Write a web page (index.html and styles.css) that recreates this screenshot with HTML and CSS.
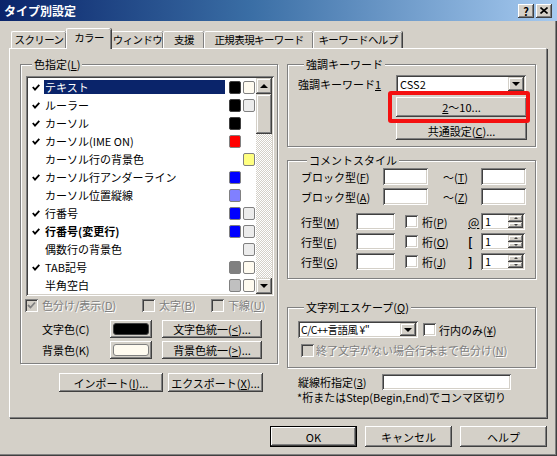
FILE: index.html
```html
<!DOCTYPE html>
<html lang="ja">
  <head>
    <meta charset="UTF-8" />
    <title>タイプ別設定</title>
    <link rel="stylesheet" href="styles.css">
  </head>
  <body>
    <div class="window">
      <!-- title bar -->
      <div class="titlebar">
        <span class="title">タイプ別設定</span>
        <div class="cap-btns">
          <span class="cap-btn">?</span>
          <span class="cap-btn">
            <svg width="8" height="7" viewBox="0 0 8 7"><path d="M0.5 0.5 L7.5 6.5 M7.5 0.5 L0.5 6.5" stroke="#000" stroke-width="1.6" /></svg>
          </span>
        </div>
      </div>

      <!-- tabs -->
      <div class="tabs">
        <div class="tab">スクリーン</div>
        <div class="tab active">カラー</div>
        <div class="tab">ウィンドウ</div>
        <div class="tab">支援</div>
        <div class="tab">正規表現キーワード</div>
        <div class="tab">キーワードヘルプ</div>
      </div>

      <div class="panel">
        <!-- left column -->
        <div class="col-left">
          <fieldset class="group group-color">
            <legend>色指定(<u>L</u>)</legend>
            <div class="listbox">
              <div class="rows">
                <div class="row"><span class="mark"><svg width="8" height="7" viewBox="0 0 8 7"><path d="M0.8 3 L3 5.6 L7.3 0.8" stroke="#000" stroke-width="1.8" fill="none" /></svg></span><span class="name"><span class="sel">テキスト</span></span><span class="sw c-black"></span><span class="sw c-cream"></span></div>
                <div class="row"><span class="mark"><svg width="8" height="7" viewBox="0 0 8 7"><path d="M0.8 3 L3 5.6 L7.3 0.8" stroke="#000" stroke-width="1.8" fill="none" /></svg></span><span class="name">ルーラー</span><span class="sw c-black"></span><span class="sw c-lgray"></span></div>
                <div class="row"><span class="mark"><svg width="8" height="7" viewBox="0 0 8 7"><path d="M0.8 3 L3 5.6 L7.3 0.8" stroke="#000" stroke-width="1.8" fill="none" /></svg></span><span class="name">カーソル</span><span class="sw c-black"></span><span></span></div>
                <div class="row"><span class="mark"><svg width="8" height="7" viewBox="0 0 8 7"><path d="M0.8 3 L3 5.6 L7.3 0.8" stroke="#000" stroke-width="1.8" fill="none" /></svg></span><span class="name">カーソル(IME ON)</span><span class="sw c-red"></span><span></span></div>
                <div class="row"><span class="mark"></span><span class="name">カーソル行の背景色</span><span></span><span class="sw c-yellow"></span></div>
                <div class="row"><span class="mark"><svg width="8" height="7" viewBox="0 0 8 7"><path d="M0.8 3 L3 5.6 L7.3 0.8" stroke="#000" stroke-width="1.8" fill="none" /></svg></span><span class="name">カーソル行アンダーライン</span><span class="sw c-blue"></span><span></span></div>
                <div class="row"><span class="mark"></span><span class="name">カーソル位置縦線</span><span class="sw c-lblue"></span><span></span></div>
                <div class="row"><span class="mark"><svg width="8" height="7" viewBox="0 0 8 7"><path d="M0.8 3 L3 5.6 L7.3 0.8" stroke="#000" stroke-width="1.8" fill="none" /></svg></span><span class="name">行番号</span><span class="sw c-blue"></span><span class="sw c-lgray"></span></div>
                <div class="row"><span class="mark"><svg width="8" height="7" viewBox="0 0 8 7"><path d="M0.8 3 L3 5.6 L7.3 0.8" stroke="#000" stroke-width="1.8" fill="none" /></svg></span><span class="name bold">行番号(変更行)</span><span class="sw c-blue"></span><span class="sw c-lgray"></span></div>
                <div class="row"><span class="mark"></span><span class="name">偶数行の背景色</span><span></span><span class="sw c-lgray"></span></div>
                <div class="row"><span class="mark"><svg width="8" height="7" viewBox="0 0 8 7"><path d="M0.8 3 L3 5.6 L7.3 0.8" stroke="#000" stroke-width="1.8" fill="none" /></svg></span><span class="name">TAB記号</span><span class="sw c-gray"></span><span class="sw c-cream"></span></div>
                <div class="row"><span class="mark"></span><span class="name">半角空白</span><span class="sw c-silver"></span><span class="sw c-cream"></span></div>
              </div>
              <div class="vscroll">
                <span class="sbtn"><i class="tri-up"></i></span>
                <span class="thumb"></span>
                <span class="track"></span>
                <span class="sbtn"><i class="tri-down"></i></span>
              </div>
            </div>

            <div class="cb-row">
              <label class="cb-item w1 disabled"><span class="cb checked"></span>色分け/表示(<u>D</u>)</label>
              <label class="cb-item w2 disabled"><span class="cb off"></span>太字(<u>B</u>)</label>
              <label class="cb-item disabled"><span class="cb off"></span>下線(<u>U</u>)</label>
            </div>

            <div class="color-row">
              <span class="color-label">文字色(C)</span>
              <span class="btn color-btn"><span class="chip chip-black"></span></span>
              <span class="btn uni-btn">文字色統一(<u>&lt;</u>)...</span>
            </div>
            <div class="color-row">
              <span class="color-label">背景色(K)</span>
              <span class="btn color-btn"><span class="chip chip-cream"></span></span>
              <span class="btn uni-btn">背景色統一(<u>&gt;</u>)...</span>
            </div>
          </fieldset>

          <div class="io-row">
            <span class="btn import-btn">インポート(<u>I</u>)...</span>
            <span class="btn export-btn">エクスポート(<u>X</u>)...</span>
          </div>
        </div>

        <!-- right column -->
        <div class="col-right">
          <fieldset class="group group-kw">
            <legend>強調キーワード</legend>
            <div class="kw-row">
              <span class="kw-label">強調キーワード<u>1</u></span>
              <span class="combo kw-combo"><span class="combo-val">CSS2</span><span class="combo-btn"><i class="tri-down"></i></span></span>
            </div>
            <div class="kw-btn-wrap">
              <span class="btn kw-btn tall"><u>2</u>〜10...</span>
              <span class="mark-box"></span>
            </div>
            <span class="btn kw-btn common">共通設定(<u>C</u>)...</span>
          </fieldset>

          <fieldset class="group group-comment">
            <legend>コメントスタイル</legend>
            <div class="brow">
              <span>ブロック型(<u>F</u>)</span>
              <span class="field"></span>
              <span class="tilde">〜(<u>T</u>)</span>
              <span class="field"></span>
            </div>
            <div class="brow">
              <span>ブロック型(<u>A</u>)</span>
              <span class="field"></span>
              <span class="tilde">〜(<u>Z</u>)</span>
              <span class="field"></span>
            </div>
            <div class="lrow first">
              <span>行型(<u>M</u>)</span>
              <span class="field"></span>
              <span></span>
              <label class="cb-item"><span class="cb"></span>桁(<u>P</u>)</label>
              <span class="pos"><u>@</u></span>
              <span class="spin"><span class="spin-val">1</span><span class="spin-btns"><span class="sbtn half"><i class="mini-up"></i></span><span class="sbtn half"><i class="mini-down"></i></span></span></span>
            </div>
            <div class="lrow">
              <span>行型(<u>E</u>)</span>
              <span class="field"></span>
              <span></span>
              <label class="cb-item"><span class="cb"></span>桁(<u>O</u>)</label>
              <span class="pos bold">[</span>
              <span class="spin"><span class="spin-val">1</span><span class="spin-btns"><span class="sbtn half"><i class="mini-up"></i></span><span class="sbtn half"><i class="mini-down"></i></span></span></span>
            </div>
            <div class="lrow">
              <span>行型(<u>G</u>)</span>
              <span class="field"></span>
              <span></span>
              <label class="cb-item"><span class="cb"></span>桁(<u>J</u>)</label>
              <span class="pos bold">]</span>
              <span class="spin"><span class="spin-val">1</span><span class="spin-btns"><span class="sbtn half"><i class="mini-up"></i></span><span class="sbtn half"><i class="mini-down"></i></span></span></span>
            </div>
          </fieldset>

          <fieldset class="group group-esc">
            <legend>文字列エスケープ(<u>Q</u>)</legend>
            <div class="esc-row">
              <span class="combo esc-combo"><span class="combo-val">C/C++言語風 ¥"</span><span class="combo-btn"><i class="tri-down"></i></span></span>
              <label class="cb-item"><span class="cb"></span>行内のみ(<u>¥</u>)</label>
            </div>
            <div class="esc-row2">
              <label class="cb-item disabled"><span class="cb off"></span>終了文字がない場合行末まで色分け(<u>N</u>)</label>
            </div>
          </fieldset>

          <div class="vline-row">
            <span class="vline-label">縦線桁指定(<u>3</u>)</span>
            <span class="field vline-field"></span>
          </div>
          <div class="note">*桁またはStep(Begin,End)でコンマ区切り</div>
        </div>
      </div>

      <div class="footer">
        <span class="btn foot-btn default">OK</span>
        <span class="btn foot-btn">キャンセル</span>
        <span class="btn foot-btn">ヘルプ</span>
      </div>
    </div>
  </body>
</html>
```

FILE: styles.css
```css
body {
  margin: 0;
  font-family: "Noto Sans CJK JP", "Noto Sans", sans-serif;
  font-size: 11px;
  color: #000;
  background: #d4d0c8;
}

u {
  text-decoration: underline;
  text-underline-offset: 1px;
}

.bold {
  font-weight: bold;
}

.window {
  width: 557px;
  height: 456px;
  box-sizing: border-box;
  background: #d4d0c8;
  box-shadow: inset -1px -1px #404040, inset -2px -2px #808080;
  overflow: hidden;
}

/* title bar */
.titlebar {
  height: 21px;
  display: flex;
  align-items: center;
  justify-content: space-between;
  padding: 0 5px 0 4px;
  background: linear-gradient(90deg, #0a246a 0%, #3a6ea5 45%, #a6caf0 100%);
}

.title {
  color: #fff;
  font-weight: bold;
  font-size: 12px;
  line-height: 14px;
}

.cap-btns {
  display: flex;
  gap: 2px;
}

.cap-btn {
  width: 16px;
  height: 14px;
  box-sizing: border-box;
  display: flex;
  align-items: center;
  justify-content: center;
  background: #d4d0c8;
  font-weight: bold;
  font-size: 11px;
  line-height: 12px;
  box-shadow: inset -1px -1px #404040, inset 1px 1px #fff, inset -2px -2px #808080;
}

/* generic win classic parts */
.btn {
  display: flex;
  align-items: center;
  justify-content: center;
  box-sizing: border-box;
  background: #d4d0c8;
  box-shadow: inset -1px -1px #404040, inset 1px 1px #fff, inset -2px -2px #808080, inset 2px 2px #d4d0c8;
  white-space: nowrap;
}

.sbtn {
  display: flex;
  align-items: center;
  justify-content: center;
  box-sizing: border-box;
  background: #d4d0c8;
  box-shadow: inset -1px -1px #404040, inset 1px 1px #d4d0c8, inset -2px -2px #808080, inset 2px 2px #fff;
}

.field {
  display: block;
  box-sizing: border-box;
  height: 17px;
  background: #fff;
  box-shadow: inset 1px 1px #808080, inset -1px -1px #fff, inset 2px 2px #404040, inset -2px -2px #d4d0c8;
}

.tri-up,
.tri-down {
  width: 0;
  height: 0;
  border-left: 4px solid transparent;
  border-right: 4px solid transparent;
}

.tri-up {
  border-bottom: 4px solid #000;
}

.tri-down {
  border-top: 4px solid #000;
}

.mini-up,
.mini-down {
  width: 0;
  height: 0;
  border-left: 2px solid transparent;
  border-right: 2px solid transparent;
}

.mini-up {
  border-bottom: 2px solid #404040;
}

.mini-down {
  border-top: 2px solid #404040;
}

/* tabs */
.tabs {
  display: flex;
  align-items: flex-end;
  height: 20px;
  margin-top: 7px;
  padding-left: 11px;
}

.tab {
  height: 17px;
  box-sizing: border-box;
  border-top: 1px solid #fff;
  border-left: 1px solid #fff;
  border-radius: 2px 2px 0 0;
  box-shadow: inset -1px 0 #808080, 1px 0 #404040;
  display: flex;
  align-items: center;
  justify-content: center;
  font-size: 10.5px;
  line-height: 14px;
  letter-spacing: -0.6px;
  white-space: nowrap;
}

.tab:nth-child(1) { width: 55px; }
.tab:nth-child(2) { width: 45px; }
.tab:nth-child(3) { width: 52px; }
.tab:nth-child(4) { width: 41px; }
.tab:nth-child(5) { width: 109px; }
.tab:nth-child(6) { width: 89px; }

.tab.active {
  height: 21px;
  margin-bottom: -1px;
  padding-bottom: 3px;
  background: #d4d0c8;
  position: relative;
  z-index: 1;
}

/* panel */
.panel {
  margin-left: 9px;
  width: 538px;
  height: 370px;
  box-sizing: border-box;
  border-top: 1px solid #fff;
  border-left: 1px solid #fff;
  border-right: 1px solid #808080;
  border-bottom: 1px solid #808080;
  box-shadow: 1px 1px 0 #404040;
  display: flex;
  gap: 9px;
  padding: 8px 0 0 10px;
}

.col-left {
  width: 258px;
}

.col-right {
  width: 249px;
}

.group {
  margin: 0;
  min-width: 0;
  box-sizing: border-box;
  border: 1px solid #808080;
  box-shadow: inset 1px 1px #fff, 1px 1px #fff;
}

.group legend {
  padding: 0 2px;
  margin-left: 6px;
  line-height: 15px;
  background: #d4d0c8;
}

/* colour group */
.group-color {
  padding: 4px 3px 4px 5px;
}

.listbox {
  height: 220px;
  box-sizing: border-box;
  padding: 2px;
  display: flex;
  background: #fff;
  box-shadow: inset 1px 1px #808080, inset -1px -1px #fff, inset 2px 2px #404040, inset -2px -2px #d4d0c8;
}

.rows {
  flex: 1;
  overflow: hidden;
}

.row {
  height: 18px;
  display: grid;
  grid-template-columns: 17px 1fr 14px 14px;
  align-items: center;
  padding-right: 1px;
  white-space: nowrap;
}

.mark {
  display: flex;
  padding-left: 4px;
}

.name {
  line-height: 14px;
}

.sel {
  background: #0a246a;
  color: #fff;
  display: block;
  margin-left: -1px;
  padding-left: 1px;
  margin-right: 2px;
}

.sw {
  justify-self: end;
  width: 12px;
  height: 13px;
  box-sizing: border-box;
  border: 1px solid #808080;
  border-radius: 2px;
}

.c-black { background: #000; border-color: #404040; }
.c-cream { background: #fffbf0; }
.c-lgray { background: #ececec; }
.c-red { background: #ff0000; }
.c-yellow { background: #ffff80; }
.c-blue { background: #0000ff; }
.c-lblue { background: #8080ff; }
.c-gray { background: #808080; }
.c-silver { background: #c0c0c0; }

.vscroll {
  width: 16px;
  display: flex;
  flex-direction: column;
}

.vscroll .sbtn {
  height: 16px;
}

.vscroll .thumb {
  height: 40px;
  box-sizing: border-box;
  background: #d4d0c8;
  box-shadow: inset -1px -1px #404040, inset 1px 1px #d4d0c8, inset -2px -2px #808080, inset 2px 2px #fff;
}

.vscroll .track {
  flex: 1;
  background: repeating-conic-gradient(#d4d0c8 0 25%, #fff 0 50%) 0 0 / 2px 2px;
}

.cb-row {
  height: 18px;
  display: flex;
  align-items: center;
  margin-left: -1px;
}

.cb-item {
  display: flex;
  align-items: center;
  white-space: nowrap;
  line-height: 14px;
}

.cb-item.w1 { width: 117px; }
.cb-item.w2 { width: 69px; }

.cb {
  width: 13px;
  height: 13px;
  flex: none;
  box-sizing: border-box;
  margin-right: 4px;
  background: #fff;
  box-shadow: inset 1px 1px #808080, inset -1px -1px #fff, inset 2px 2px #404040, inset -2px -2px #d4d0c8;
}

.cb.off {
  background: #d4d0c8;
}

.cb.checked {
  background: #d4d0c8 url("data:image/svg+xml,%3Csvg xmlns='http://www.w3.org/2000/svg' width='13' height='13'%3E%3Cpath d='M3 6 L5.5 8.5 L10 3.5' stroke='%23808080' stroke-width='1.8' fill='none'/%3E%3C/svg%3E") no-repeat;
}

.disabled {
  color: #808080;
  text-shadow: 1px 1px 0 #fff;
}

.color-row {
  display: flex;
  align-items: center;
  height: 18px;
  margin-top: 6px;
}

.color-row + .color-row {
  margin-top: 3px;
}

.color-label {
  width: 68px;
  padding-left: 16px;
}

.color-btn {
  width: 42px;
  height: 18px;
  margin-right: 10px;
  padding: 3px;
}

.chip {
  display: block;
  width: 100%;
  height: 12px;
  box-sizing: border-box;
  border-radius: 3px;
  border: 1px solid #404040;
}

.chip-black { background: #000; }
.chip-cream { background: #fffbf0; border-color: #808080; }

.uni-btn {
  width: 100px;
  height: 18px;
}

.io-row {
  display: flex;
  gap: 5px;
  margin-top: 9px;
  padding-left: 39px;
}

.io-row .btn {
  height: 19px;
}

.import-btn { width: 104px; }
.export-btn { width: 95px; }

/* keyword group */
.group-kw {
  padding: 3px 0 6px 10px;
}

.kw-row {
  display: flex;
  align-items: center;
  height: 18px;
}

.kw-label {
  width: 98px;
}

.combo {
  display: flex;
  box-sizing: border-box;
  padding: 2px;
  background: #fff;
  box-shadow: inset 1px 1px #808080, inset -1px -1px #fff, inset 2px 2px #404040, inset -2px -2px #d4d0c8;
}

.combo-val {
  flex: 1;
  padding-left: 2px;
  line-height: 14px;
  white-space: nowrap;
}

.combo-btn {
  width: 16px;
  flex: none;
  display: flex;
  align-items: center;
  justify-content: center;
  background: #d4d0c8;
  box-shadow: inset -1px -1px #404040, inset 1px 1px #d4d0c8, inset -2px -2px #808080, inset 2px 2px #fff;
}

.kw-combo {
  width: 130px;
  height: 18px;
}

.kw-btn-wrap {
  position: relative;
  margin: 4px 0 0 98px;
  width: 131px;
}

.kw-btn {
  width: 131px;
}

.kw-btn.tall {
  height: 20px;
}

.kw-btn.common {
  height: 18px;
  margin: 5px 0 0 98px;
}

/* red highlight drawn over the button */
.mark-box {
  position: absolute;
  left: -8px;
  top: -6px;
  width: 142px;
  height: 32px;
  box-sizing: border-box;
  border: 4px solid #f41010;
  border-radius: 3px;
}

/* comment group */
.group-comment {
  margin-top: 6px;
  padding: 0 0 8px 13px;
}

.brow,
.lrow {
  display: grid;
  align-items: center;
  height: 17px;
  white-space: nowrap;
}

.brow {
  grid-template-columns: 82px 45px 53px 45px;
}

.brow + .brow {
  margin-top: 3px;
}

.tilde {
  padding-left: 15px;
}

.lrow {
  grid-template-columns: 55px 39px 10px 63px 13px 44px;
  margin-top: 3px;
}

.lrow.first {
  margin-top: 8px;
}

.pos {
  font-size: 12px;
}

.spin {
  display: flex;
  height: 17px;
  box-sizing: border-box;
  padding: 2px;
  background: #fff;
  box-shadow: inset 1px 1px #808080, inset -1px -1px #fff, inset 2px 2px #404040, inset -2px -2px #d4d0c8;
}

.spin-val {
  flex: 1;
  line-height: 13px;
  padding-left: 2px;
}

.spin-btns {
  width: 15px;
  display: flex;
  flex-direction: column;
}

.sbtn.half {
  flex: 1;
}

/* escape group */
.group-esc {
  margin-top: 21px;
  padding: 6px 0 10px 10px;
}

.esc-row {
  display: flex;
  align-items: center;
  height: 17px;
}

.esc-combo {
  width: 120px;
  height: 17px;
  margin-right: 5px;
}

.esc-combo .combo-val {
  padding-left: 1px;
  font-size: 10.5px;
  letter-spacing: -0.5px;
}

.esc-row .cb {
  margin-right: 3px;
}

.esc-row2 {
  display: flex;
  align-items: center;
  height: 14px;
  margin-top: 5px;
  padding-left: 3px;
}

.esc-row2 .cb {
  margin-right: 2px;
}

.vline-row {
  display: flex;
  align-items: center;
  height: 16px;
  margin-top: 6px;
  padding-left: 11px;
}

.vline-label {
  width: 84px;
  white-space: nowrap;
}

.vline-field {
  width: 129px;
  height: 16px;
}

.note {
  line-height: 15px;
  padding-left: 10px;
  white-space: nowrap;
}

/* bottom buttons */
.footer {
  display: flex;
  justify-content: flex-end;
  gap: 8px;
  padding: 8px 10px 0 0;
}

.foot-btn {
  width: 87px;
  height: 21px;
}

.foot-btn.default {
  box-shadow: inset 0 0 0 1px #000, inset -2px -2px #404040, inset 2px 2px #fff, inset -3px -3px #808080;
}
```
